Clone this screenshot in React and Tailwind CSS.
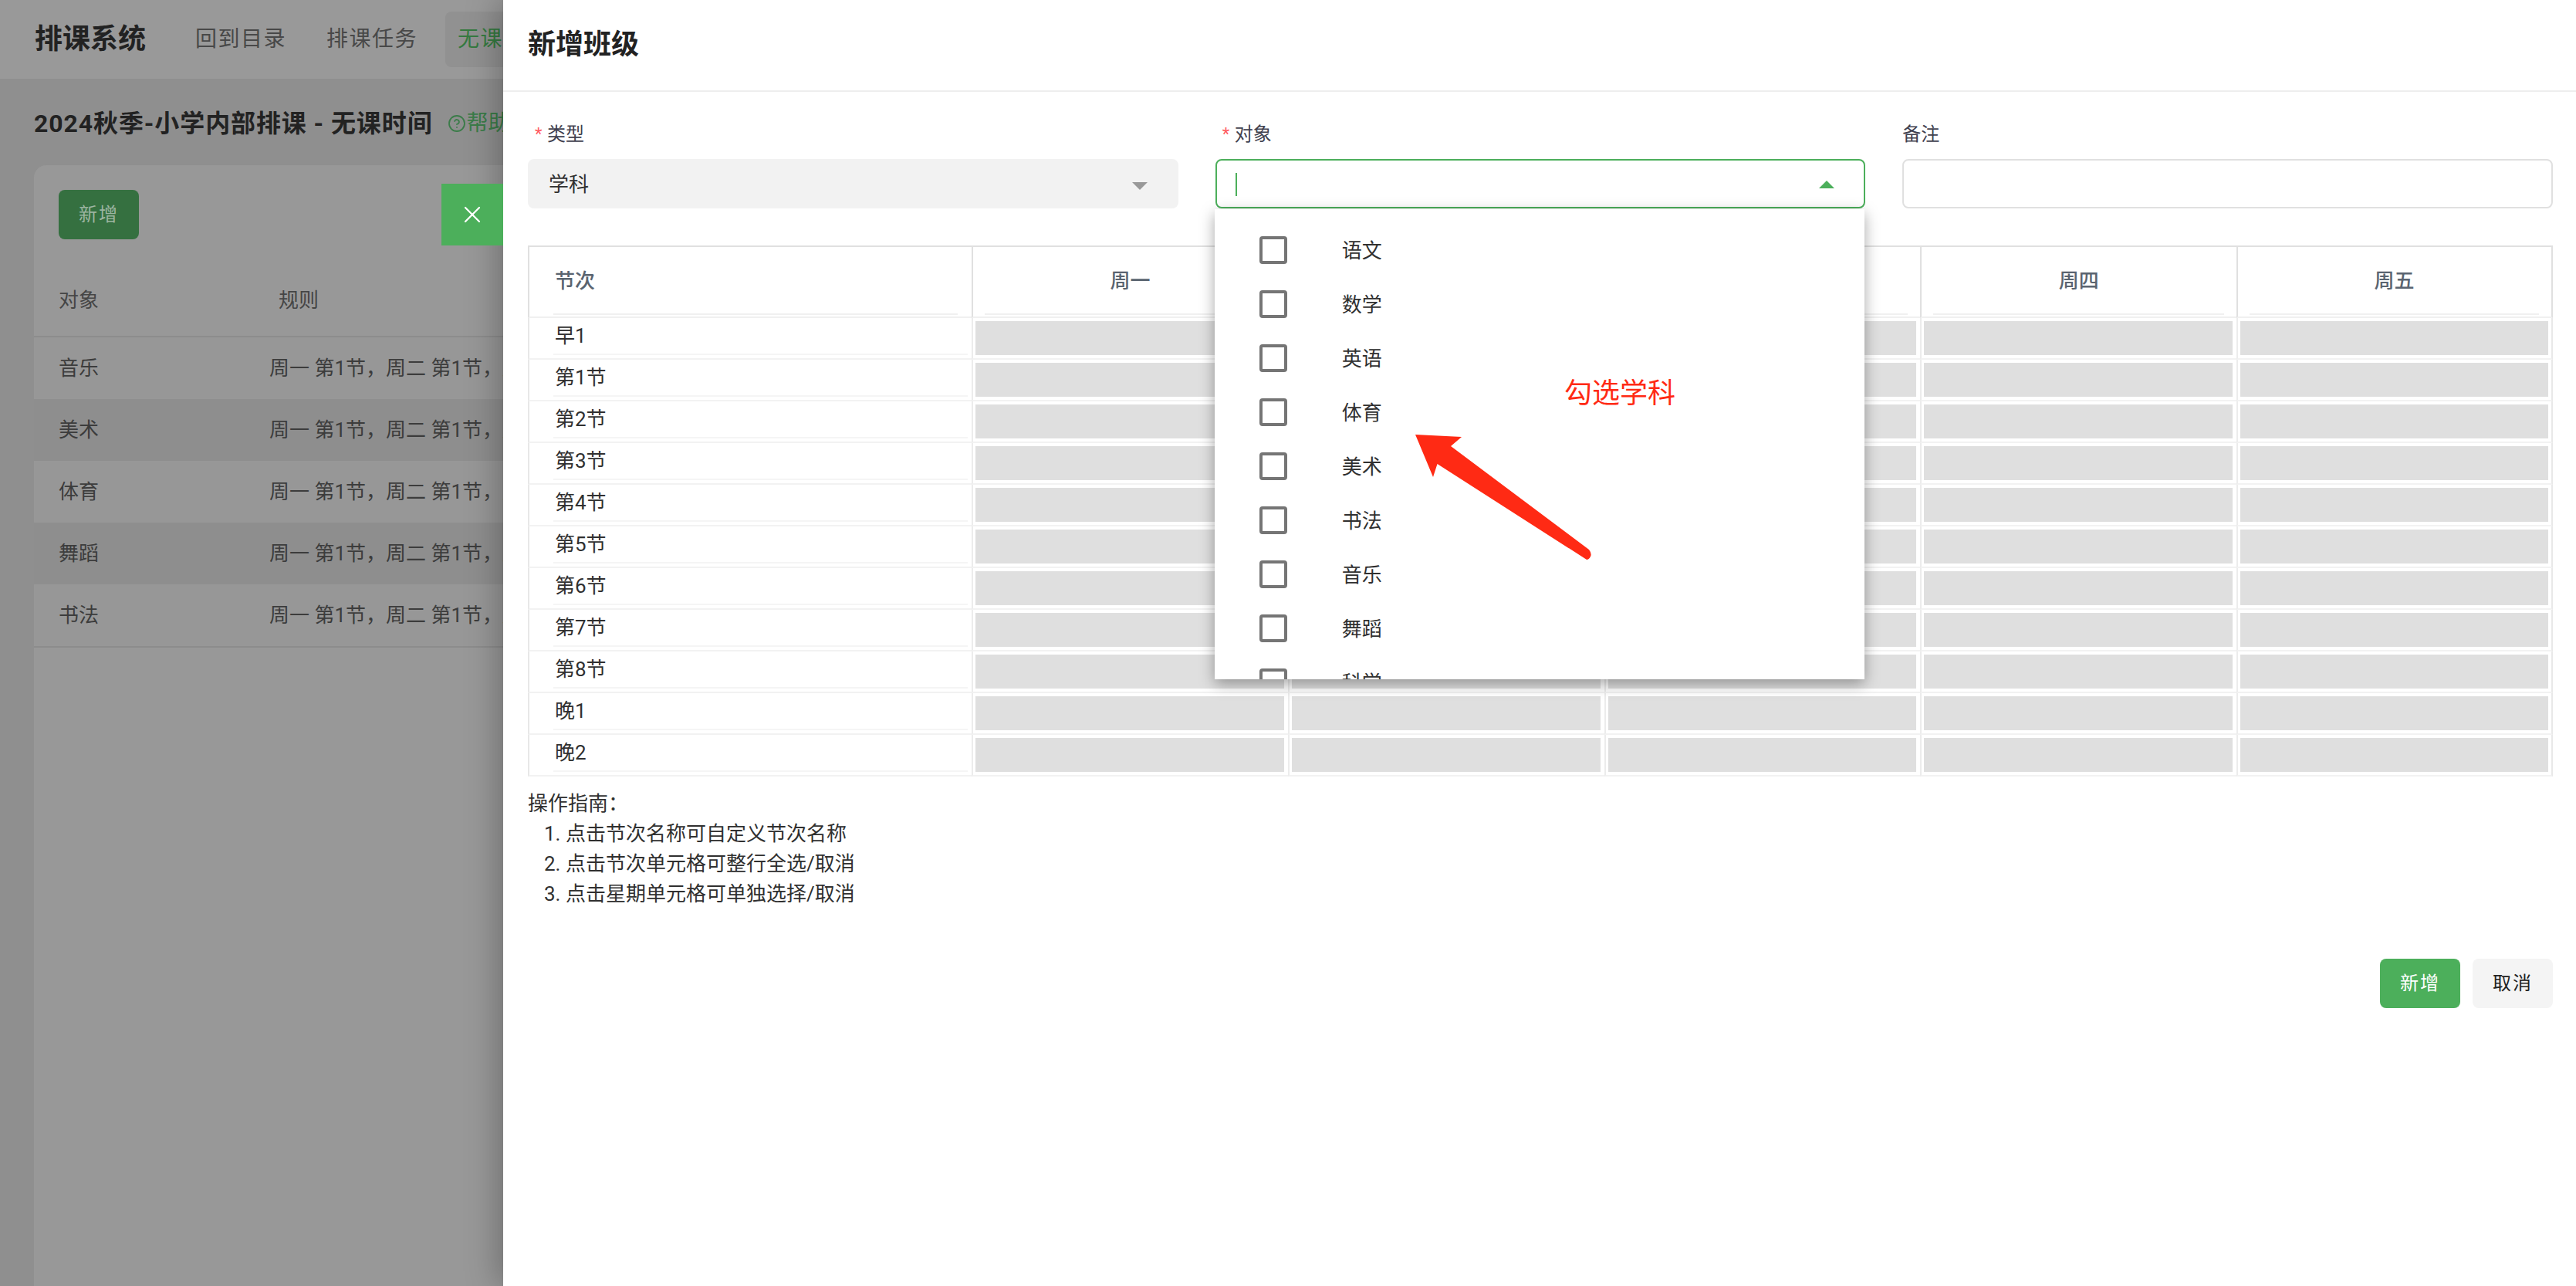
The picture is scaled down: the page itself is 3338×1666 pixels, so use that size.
import React from 'react';
import { CircleHelp, X } from 'lucide-react';

const periods = ['早1','第1节','第2节','第3节','第4节','第5节','第6节','第7节','第8节','晚1','晚2'];
const days = ['周一','周二','周三','周四','周五'];
const subjects = ['语文','数学','英语','体育','美术','书法','音乐','舞蹈','科学','历史'];
const rows = ['音乐','美术','体育','舞蹈','书法'];

function Field({ label, required, children }) {
  return (
    <div className="relative">
      <div className="h-[36px] mb-[15px] pt-[2px] flex items-center text-[24px] leading-[34px] text-[#40404e]">
        {required && <span className="w-[16px] pl-[9px] box-content text-[#ff5a60] text-[22px]">*</span>}
        <span>{label}</span>
      </div>
      {children}
    </div>
  );
}

function App() {
  return (
    <div className="relative w-[3338px] h-[1666px] overflow-hidden bg-[#8f8f8f] font-['Roboto','Noto_Sans_CJK_SC',sans-serif]">
      {/* dimmed page */}
      <div className="flex flex-col h-full">
        <nav className="h-[102px] shrink-0 bg-[#999999] flex items-center pl-[45px]">
          <div className="w-[192px] text-[36px] font-bold leading-[50px] text-[#222222]">排课系统</div>
          <div className="flex items-center gap-[20px] text-[28px] tracking-[1.5px] text-[#484848]">
            <div className="h-[72px] px-[16px] flex items-center">回到目录</div>
            <div className="h-[72px] px-[16px] flex items-center">排课任务</div>
            <div className="h-[72px] px-[16px] flex items-center rounded-[8px] bg-[#919191] text-[#357a40]">无课时间</div>
          </div>
        </nav>
        <div className="flex-1 flex flex-col pl-[44px] pr-[44px] pt-[34px]">
          <div className="h-[48px] flex items-center mb-[30px]">
            <h1 className="text-[32px] font-bold leading-[48px] tracking-[0.9px] text-[#222222]">2024秋季-小学内部排课 - 无课时间</h1>
            <CircleHelp className="ml-[19px] text-[#3b7c49]" size={24} strokeWidth={1.8} />
            <span className="text-[28px] text-[#3b7c49] ml-[1px]">帮助</span>
          </div>
          <div className="flex-1 rounded-t-[16px] bg-[#989898]">
            <div className="pt-[32px] px-[32px]">
              <button className="w-[104px] h-[64px] rounded-[8px] bg-[#357040] text-[24px] tracking-[2px] text-[#9db5a2]">新增</button>
            </div>
            <div className="h-[127px] px-[32px] pt-[34px] flex items-center border-b-2 border-[#8c8c8c] text-[26px] text-[#454545]">
              <div className="w-[285px]">对象</div>
              <div>规则</div>
            </div>
            {rows.map((r, i) => (
              <div key={r} className={`h-[80px] flex items-center px-[32px] text-[26px] text-[#3c3c3c] whitespace-nowrap ${i % 2 ? 'bg-[#8e8e8e]' : 'bg-[#979797]'}`}>
                <div className="w-[273px]">{r}</div>
                <div>周一 第1节，周二 第1节，周三 第1节，周四 第1节</div>
              </div>
            ))}
            <div className="h-[2px] bg-[#8c8c8c]" />
          </div>
        </div>
      </div>

      {/* toast close button */}
      <button className="absolute z-20 left-[572px] top-[238px] w-[80px] h-[80px] bg-[#4caf5b] flex items-center justify-center text-white">
        <X size={36} strokeWidth={1.5} />
      </button>

      {/* drawer */}
      <aside className="absolute z-10 right-0 top-0 bottom-0 w-[2686px] bg-white shadow-[-6px_0_40px_rgba(0,0,0,0.28)]">
        <header className="h-[119px] border-b-2 border-[#eeeeee] pl-[32px] flex items-center">
          <h2 className="text-[36px] font-bold leading-[50px] pb-[2px] text-[#222222]">新增班级</h2>
        </header>
        <div className="pl-[32px] pr-[30px] pt-[36px]">
          <div className="grid grid-cols-3 gap-x-[48px] mb-[48px]">
            <Field label="类型" required>
              <div className="h-[64px] rounded-[8px] bg-[#f2f2f2] pl-[27px] pr-[40px] pt-[2px] flex items-center justify-between text-[26px] text-[#303030]">
                <span>学科</span>
                <span className="w-0 h-0 mt-[4px] border-x-[10px] border-x-transparent border-t-[10px] border-t-[#999999]" />
              </div>
            </Field>
            <Field label="对象" required>
              <div className="h-[64px] rounded-[8px] border-2 border-[#4caf5b] pl-[24px] pr-[38px] pt-[2px] flex items-center justify-between">
                <span className="w-[2px] h-[30px] bg-[#4caf5b]" />
                <span className="w-0 h-0 border-x-[10px] border-x-transparent border-b-[10px] border-b-[#4caf5b]" />
              </div>
              <div className="absolute z-10 left-[-1px] top-[116px] w-[842px] h-[609px] overflow-hidden bg-white pt-[18px] pl-[58px] shadow-[0_6px_18px_rgba(0,0,0,0.35)]">
                {subjects.map((s) => (
                  <div key={s} className="h-[70px] flex items-center gap-[71px] text-[26px] text-[#303030]">
                    <span className="w-[36px] h-[36px] rounded-[4px] border-[4px] border-[#757575]" />
                    <span className="pt-[2px]">{s}</span>
                  </div>
                ))}
              </div>
            </Field>
            <Field label="备注">
              <div className="h-[64px] rounded-[8px] border-2 border-[#e0e0e0]" />
            </Field>
          </div>

          <div className="grid grid-cols-[575px_repeat(5,1fr)] w-[2624px]">
            <div className="h-[94px] border-t-2 border-l-2 border-b-2 border-[#e0e0e0] border-b-[#f0f0f0] pl-[31px] pr-[18px]">
              <div className="h-[88px] border-b-[2px] border-[#f0f0f0] pl-[2px] pt-[2px] flex items-center text-[26px] font-medium text-[#5a6470]">节次</div>
            </div>
            {days.map((d, i) => (
              <div key={d} className={`h-[94px] border-t-2 border-l-2 border-b-2 border-[#e0e0e0] border-b-[#f0f0f0] px-[15px] pr-[16px] ${i === 4 ? 'border-r-2' : ''}`}>
                <div className="h-[88px] border-b-[2px] border-[#f0f0f0] pt-[2px] flex items-center justify-center text-[26px] font-medium text-[#5a6470]">{d}</div>
              </div>
            ))}
            {periods.map((p) => (
              <React.Fragment key={p}>
                <div className="h-[54px] border-b-2 border-l-2 border-[#f2f2f2] border-l-[#e8e8e8] pl-[31px] pr-[5px]">
                  <div className="h-[48px] border-b-2 border-[#f5f5f5] pl-[2px] flex items-center text-[26px] text-[#303030]">{p}</div>
                </div>
                {days.map((d, i) => (
                  <div key={d} className={`h-[54px] border-b-2 border-l-2 border-[#f2f2f2] border-l-[#ececec] pt-[4px] pl-[3px] ${i === 4 ? 'border-r-2 border-r-[#e8e8e8] pr-[4px]' : 'pr-[5px]'}`}>
                    <div className="h-[44px] bg-[#dfdfdf]" />
                  </div>
                ))}
              </React.Fragment>
            ))}
          </div>

          <div className="mt-[16px] text-[26px] leading-[39px] text-[#303030]">
            <div>操作指南：</div>
            <div className="pl-[21px]">1. 点击节次名称可自定义节次名称</div>
            <div className="pl-[21px]">2. 点击节次单元格可整行全选/取消</div>
            <div className="pl-[21px]">3. 点击星期单元格可单独选择/取消</div>
          </div>

          <div className="mt-[64px] flex justify-end gap-[16px]">
            <button className="w-[104px] h-[64px] rounded-[8px] bg-[#4caf5b] text-white text-[24px] tracking-[2px]">新增</button>
            <button className="w-[104px] h-[64px] rounded-[8px] bg-[#f4f4f4] text-[#222222] text-[24px] tracking-[2px]">取消</button>
          </div>
        </div>
      </aside>

      {/* red annotation */}
      <div className="absolute z-30 left-[2027px] top-[492px] text-[36px] leading-[36px] text-[#ff2a14]">勾选学科</div>
      <svg className="absolute z-30 left-[1834px] top-[563px]" width="232" height="165" viewBox="1834 563 232 165">
        <path d="M1834 563 L1894 566 L1880 578 L2059 712 Q2063 717 2061 721 Q2059 725 2056 725 L1862.5 601 L1857 618 Z" fill="#ff2a14" />
      </svg>
    </div>
  );
}

export default App;
